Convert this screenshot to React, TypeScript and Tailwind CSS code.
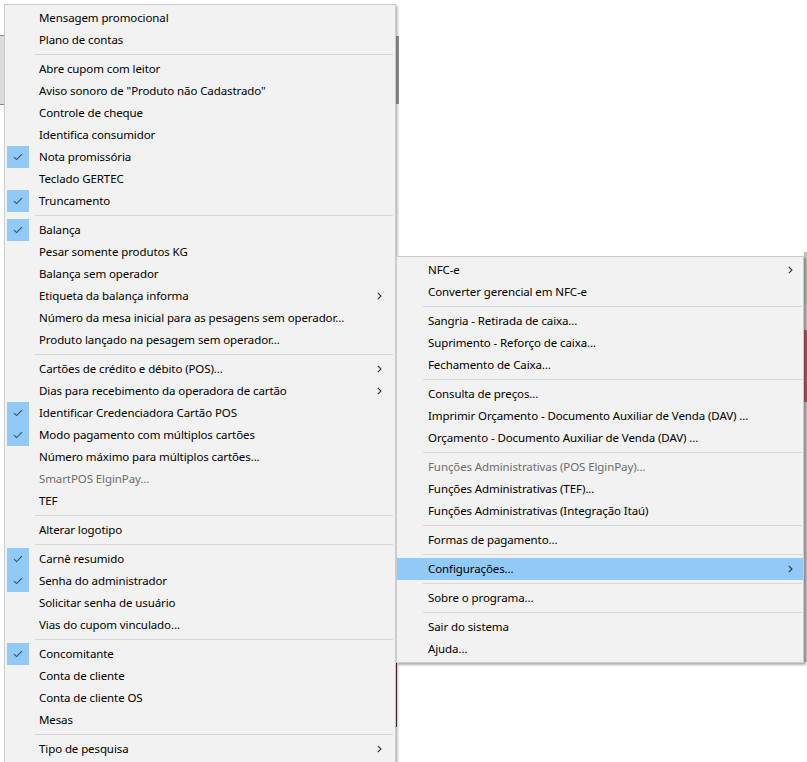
import React from "react";

type Entry =
  | { sep: true }
  | { label: string; checked?: boolean; sub?: boolean; disabled?: boolean; active?: boolean };

const S: Entry = { sep: true };

const leftItems: Entry[] = [
  { label: "Mensagem promocional" },
  { label: "Plano de contas" },
  S,
  { label: "Abre cupom com leitor" },
  { label: 'Aviso sonoro de "Produto não Cadastrado"' },
  { label: "Controle de cheque" },
  { label: "Identifica consumidor" },
  { label: "Nota promissória", checked: true },
  { label: "Teclado GERTEC" },
  { label: "Truncamento", checked: true },
  S,
  { label: "Balança", checked: true },
  { label: "Pesar somente produtos KG" },
  { label: "Balança sem operador" },
  { label: "Etiqueta da balança informa", sub: true },
  { label: "Número da mesa inicial para as pesagens sem operador..." },
  { label: "Produto lançado na pesagem sem operador..." },
  S,
  { label: "Cartões de crédito e débito (POS)...", sub: true },
  { label: "Dias para recebimento da operadora de cartão", sub: true },
  { label: "Identificar Credenciadora Cartão POS", checked: true },
  { label: "Modo pagamento com múltiplos cartões", checked: true },
  { label: "Número máximo para múltiplos cartões..." },
  { label: "SmartPOS ElginPay...", disabled: true },
  { label: "TEF" },
  S,
  { label: "Alterar logotipo" },
  S,
  { label: "Carnê resumido", checked: true },
  { label: "Senha do administrador", checked: true },
  { label: "Solicitar senha de usuário" },
  { label: "Vias do cupom vinculado..." },
  S,
  { label: "Concomitante", checked: true },
  { label: "Conta de cliente" },
  { label: "Conta de cliente OS" },
  { label: "Mesas" },
  S,
  { label: "Tipo de pesquisa", sub: true },
];

const rightItems: Entry[] = [
  { label: "NFC-e", sub: true },
  { label: "Converter gerencial em NFC-e" },
  S,
  { label: "Sangria - Retirada de caixa..." },
  { label: "Suprimento - Reforço de caixa..." },
  { label: "Fechamento de Caixa..." },
  S,
  { label: "Consulta de preços..." },
  { label: "Imprimir Orçamento - Documento Auxiliar de Venda (DAV) ..." },
  { label: "Orçamento - Documento Auxiliar de Venda (DAV) ..." },
  S,
  { label: "Funções Administrativas (POS ElginPay)...", disabled: true },
  { label: "Funções Administrativas (TEF)..." },
  { label: "Funções Administrativas (Integração Itaú)" },
  S,
  { label: "Formas de pagamento..." },
  S,
  { label: "Configurações...", sub: true, active: true },
  S,
  { label: "Sobre o programa..." },
  S,
  { label: "Sair do sistema" },
  { label: "Ajuda..." },
];

function Check() {
  return (
    <span className="flex h-[22px] w-[22px] items-center justify-center bg-[#91c9f7]">
      <svg width="10" height="8" viewBox="0 0 10 8" fill="none">
        <path d="M1 4.2 L3.6 6.6 L9 1.2" stroke="#35506b" strokeWidth="1.1" />
      </svg>
    </span>
  );
}

function Arrow() {
  return (
    <svg width="5" height="8" viewBox="0 0 5 8" fill="none">
      <path d="M0.8 0.8 L4 4 L0.8 7.2" stroke="#333" strokeWidth="1.1" />
    </svg>
  );
}

function MenuList({ items, wide }: { items: Entry[]; wide: boolean }) {
  return (
    <div className="flex flex-col py-[2px]">
      {items.map((it, i) =>
        "sep" in it ? (
          <div key={i} className={`flex h-[7px] items-center ${wide ? "pl-[30px] pr-[2px]" : "pl-[26px] pr-[1px]"}`}>
            <div className="h-px w-full bg-[#d7d7d7]" />
          </div>
        ) : (
          <div
            key={i}
            className={`flex h-[22px] items-center ${it.active ? "bg-[#91c9f7]" : ""} ${
              wide ? "pl-[2px] pr-[13px]" : "pr-[10px]"
            }`}
          >
            {wide ? (
              <span className="w-[22px] shrink-0">{it.checked ? <Check /> : null}</span>
            ) : null}
            <span
              className={`flex-1 whitespace-nowrap ${wide ? "pl-[10px]" : "pl-[31px]"} ${
                it.disabled ? "text-[#6d6d6d]" : "text-black"
              }`}
            >
              {it.label}
            </span>
            {it.sub ? <Arrow /> : null}
          </div>
        )
      )}
    </div>
  );
}

export default function App() {
  return (
    <div
      className="relative h-[762px] w-[807px] overflow-hidden bg-white text-[11.5px] leading-none tracking-[-0.1px]"
      style={{ fontFamily: '"Noto Sans", "Open Sans", sans-serif' }}
    >
      {/* bits of the window behind the menus */}
      <div className="absolute left-0 top-[35px] h-[70px] w-[6px] border-y border-[#8a8a8a] bg-[#dcdcdc]" />
      <div className="absolute left-[396px] top-[36px] h-[68px] w-[3px] bg-[#9a9a9a]" />
      <div className="absolute left-[804px] top-[252px] flex h-[410px] w-[3px] flex-col">
        <div className="h-[52px] bg-[#a9cfb4]" />
        <div className="h-[26px] bg-[#c8c8c8]" />
        <div className="h-[72px] bg-[#b45c5c]" />
        <div className="flex-1 bg-[#c8c8c8]" />
      </div>
      <div className="absolute left-[396px] top-[663px] h-[64px] w-px bg-[#5a2a2a]" />

      <div className="absolute left-[4px] top-[4px] w-[392px] border border-[#cccccc] bg-[#f2f2f2] shadow-[2px_2px_2px_rgba(0,0,0,0.25)]">
        <MenuList items={leftItems} wide />
      </div>

      <div className="absolute left-[396px] top-[256px] w-[408px] border border-[#cccccc] bg-[#f2f2f2] shadow-[2px_2px_2px_rgba(0,0,0,0.3)]">
        <MenuList items={rightItems} wide={false} />
      </div>
    </div>
  );
}
